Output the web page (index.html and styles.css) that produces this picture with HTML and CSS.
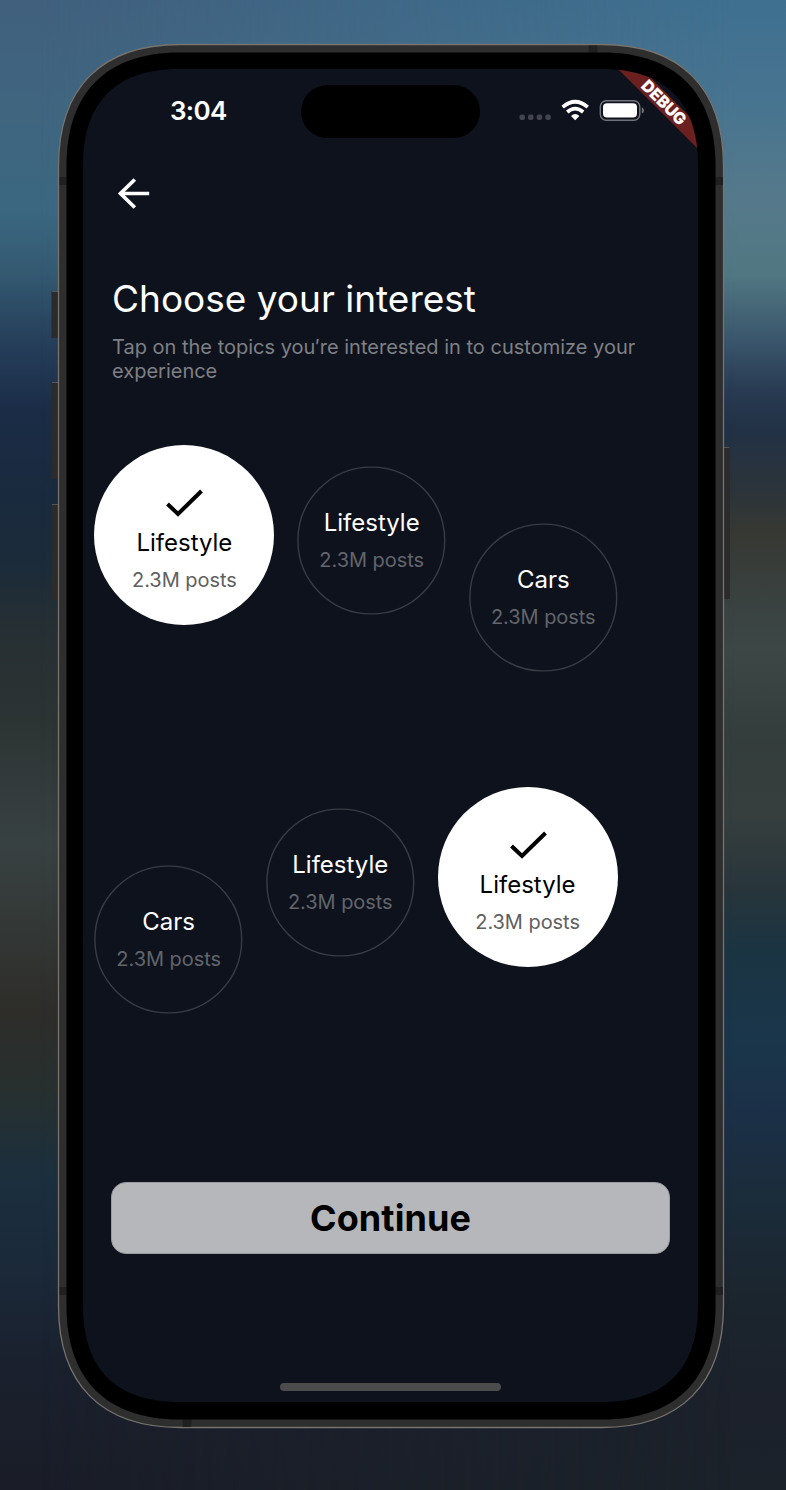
FILE: index.html
```html
<!DOCTYPE html>
<html lang="en">
<head>
<meta charset="utf-8">
<title>Choose your interest</title>
<link rel="stylesheet" href="styles.css">
</head>
<body>
<div class="wallpaper"></div>
<main class="phone">
  <svg class="frame" width="786" height="1490" viewBox="0 0 786 1490" aria-hidden="true">
    <g fill="#2b2b2b">
      <rect x="51.5" y="291" width="8" height="47"/><rect x="51.5" y="382" width="8" height="97"/><rect x="51.5" y="504" width="8" height="96"/><rect x="722" y="447" width="8" height="152"/>
    </g>
    <path d="M52 291.5h6M52 382.5h6M52 504.5h6M724 447.5h5.500" stroke="#555"/>
    <path d="M58.500 166.500C58.500 87.500 101.500 44.500 180.500 44.500H601.500C680.500 44.500 723.500 87.500 723.500 166.500V1305.500C723.500 1384.500 680.500 1427.500 601.500 1427.500H180.500C101.500 1427.500 58.500 1384.500 58.500 1305.500Z" fill="#2e2e2e" stroke="#77736f" stroke-width="1.300"/>
    <path d="M588.500 45.500h9v8h-9zM182.500 1419h9v8h-9zM59.500 177h8v8h-8zM59.500 1287h8v8h-8zM715 177h8v8h-8zM715 1287h8v8h-8z" fill="#202020"/>
    <path d="M66.500 165.500C66.500 92.500 106.500 52.500 179.500 52.500H602.500C675.500 52.500 715.500 92.500 715.500 165.500V1306.500C715.500 1379.500 675.500 1419.500 602.500 1419.500H179.500C106.500 1419.500 66.500 1379.500 66.500 1306.500Z" fill="#000"/>
    <path d="M83 165C83 102 116 69 179 69H602C665 69 698 102 698 165V1306C698 1369 665 1402 602 1402H179C116 1402 83 1369 83 1306Z" fill="#0e121c"/>
    <clipPath id="screen"><path d="M83 165C83 102 116 69 179 69H602C665 69 698 102 698 165V1303H83Z"/></clipPath>
    <g clip-path="url(#screen)">
      <path d="M618 69H642L698 125V149Z" fill="#6b1f1e"/>
      <text class="debug" transform="translate(664 102.500) rotate(45)" text-anchor="middle" y="5.700">DEBUG</text>
    </g>
  </svg>

  <section class="screen">
    <header class="status">
      <span class="time">3:04</span>
      <span class="island"></span>
      <svg class="indicators" width="128" height="30" viewBox="516 95 128 30" aria-label="Status">
        <g fill="#42444f"><rect x="519.500" y="114.500" width="5.500" height="5.500" rx="2"/><rect x="528" y="114.500" width="5.500" height="5.500" rx="2"/><rect x="536.700" y="114.500" width="5.500" height="5.500" rx="2"/><rect x="545.300" y="114.500" width="5.500" height="5.500" rx="2"/></g>
        <g fill="none" stroke="#fff" stroke-width="3.700"><path d="M562.700 107.100Q575.200 96.400 587.700 107.100"/><path d="M567.200 112Q575.200 105.400 583.200 112"/></g>
        <path d="M571 115.900Q575.200 112.300 579.400 115.900L575.200 120.200Z" fill="#fff"/>
        <rect x="600.300" y="100.800" width="39.500" height="19.500" rx="6" fill="none" stroke="#72757d" stroke-width="1.400"/>
        <rect x="603" y="103.300" width="34" height="14.300" rx="4" fill="#fff"/>
        <path d="M641.800 107.300Q644 108 644 110.400T641.800 113.500Z" fill="#72757d"/>
      </svg>
    </header>
    <svg class="back" width="34" height="34" viewBox="117 176 34 34" aria-label="Back"><path d="M134.800 179.500L120.500 193.500L134.800 207.500M120.500 193.500H149.200" fill="none" stroke="#fff" stroke-width="3.700"/></svg>

    <h1 class="title">Choose your interest</h1>
    <p class="subtitle">Tap on the topics you′re interested in to customize your<br>experience</p>

    <div class="topics topics-top">
      <div class="topic selected"><svg class="check" width="38" height="30" viewBox="0 0 38 30"><path d="M2.500 16L13 26L36.500 3" fill="none" stroke="#000" stroke-width="4"/></svg><b>Lifestyle</b><span>2.3M posts</span></div>
      <div class="topic mid"><svg class="ring" viewBox="0 0 149 149"><circle cx="74.500" cy="74.500" r="73.600"/></svg><b>Lifestyle</b><span>2.3M posts</span></div>
      <div class="topic low"><svg class="ring" viewBox="0 0 149 149"><circle cx="74.500" cy="74.500" r="73.600"/></svg><b>Cars</b><span>2.3M posts</span></div>
    </div>
    <div class="topics">
      <div class="topic low"><svg class="ring" viewBox="0 0 149 149"><circle cx="74.500" cy="74.500" r="73.600"/></svg><b>Cars</b><span>2.3M posts</span></div>
      <div class="topic mid"><svg class="ring" viewBox="0 0 149 149"><circle cx="74.500" cy="74.500" r="73.600"/></svg><b>Lifestyle</b><span>2.3M posts</span></div>
      <div class="topic selected"><svg class="check" width="38" height="30" viewBox="0 0 38 30"><path d="M2.500 16L13 26L36.500 3" fill="none" stroke="#000" stroke-width="4"/></svg><b>Lifestyle</b><span>2.3M posts</span></div>
    </div>
    <button class="continue">Continue</button>
    <div class="home"></div>
  </section>
</main>
</body>
</html>
```
FILE: styles.css
```css
* { box-sizing: border-box; }
body { margin: 0; width: 786px; height: 1490px; overflow: hidden; position: relative; font-family: Inter, "Liberation Sans", sans-serif; color: #fff;
  background: linear-gradient(180deg, #40607e 0, #40657f 100px, #3b6781 210px, #345a72 270px, #263f5b 340px, #1b2c47 410px, #1a2a3f 480px, #1b2b3a 560px, #262f33 630px, #2c3333 720px, #384142 840px, #343a38 910px, #2e2d2a 1010px, #27302f 1090px, #1b2f3e 1180px, #1b2939 1270px, #1a202d 1370px, #1a1d28 1490px); }
.wallpaper { position: absolute; inset: 0;
  background: linear-gradient(180deg, #3f7090 0, #477490 100px, #55798a 200px, #517782 275px, #3a566c 340px, #283b52 390px, #223145 430px, #2b343a 490px, #363833 530px, #3a4341 610px, #3c4746 650px, #333d3c 740px, #373f3e 810px, #27353b 890px, #1b3442 950px, #1a364b 1040px, #1b3048 1110px, #1b2c3a 1200px, #1b252e 1300px, #1c212b 1400px, #1b222a 1490px);
  -webkit-mask-image: linear-gradient(90deg, transparent 5%, #000 94%); mask-image: linear-gradient(90deg, transparent 5%, #000 94%); }
.phone { position: relative; width: 786px; height: 1490px; padding: 69px 88px 88px 83px; }
.frame { position: absolute; left: 0; top: 0; }
.debug { font: 800 16px Inter, sans-serif; fill: #fff; stroke: #fff; stroke-width: .3px; }
.screen { position: relative; width: 615px; height: 1333px; display: flex; flex-direction: column; }
.status { height: 69px; padding-top: 16px; display: grid; grid-template-columns: 218px 218px 128px; align-items: start; }
.time { font-size: 26px; line-height: 32px; font-weight: 600; padding: 10px 0 0 87px; letter-spacing: -.7px; }
.island { width: 179px; height: 53px; border-radius: 27px; background: #000; }
.indicators { margin: 10px 0 0 -3px; }
.back { margin: 38px 0 0 34px; }
.title { margin: 65px 0 0 29px; font-size: 37px; line-height: 48px; font-weight: 400; white-space: nowrap; }
.subtitle { margin: 12px 0 0 29px; font-size: 20px; line-height: 24px; color: #7e8085; white-space: nowrap; }
.topics { display: flex; gap: 23px; padding-left: 11.400px; height: 227px; align-items: flex-start; }
.topics-top { margin-top: 62px; height: 342px; }
.topic { position: relative; width: 148.600px; height: 149px; flex: none; border-radius: 50%; display: flex; flex-direction: column; align-items: center; padding-top: 41px; white-space: nowrap; }
.ring { position: absolute; inset: 0; width: 100%; height: 100%; fill: none; stroke: #383c45; stroke-width: 1.400; }
.topic b { font-size: 24px; line-height: 32px; font-weight: 400; }
.topic span { margin-top: 8px; font-size: 20px; line-height: 26px; letter-spacing: -.05px; color: #62656c; }
.mid { margin-top: 21px; }
.low { margin-top: 78px; }
.selected { width: 180px; height: 180px; background: #fff; color: #000; padding-top: 43px; }
.selected .check { margin-bottom: 9px; }
.selected span { color: #606060; }
.continue { margin: 168px 0 0 28px; width: 559px; height: 72px; flex: none; border: 1px solid #9b9ca0; border-radius: 15px; background: #b6b7bb; color: #000; font: 700 36px Inter, sans-serif; letter-spacing: .1px; padding: 0; }
.home { width: 221px; height: 8px; border-radius: 4px; background: #4b4b4b; margin: 129px 0 0 197px; }
```
